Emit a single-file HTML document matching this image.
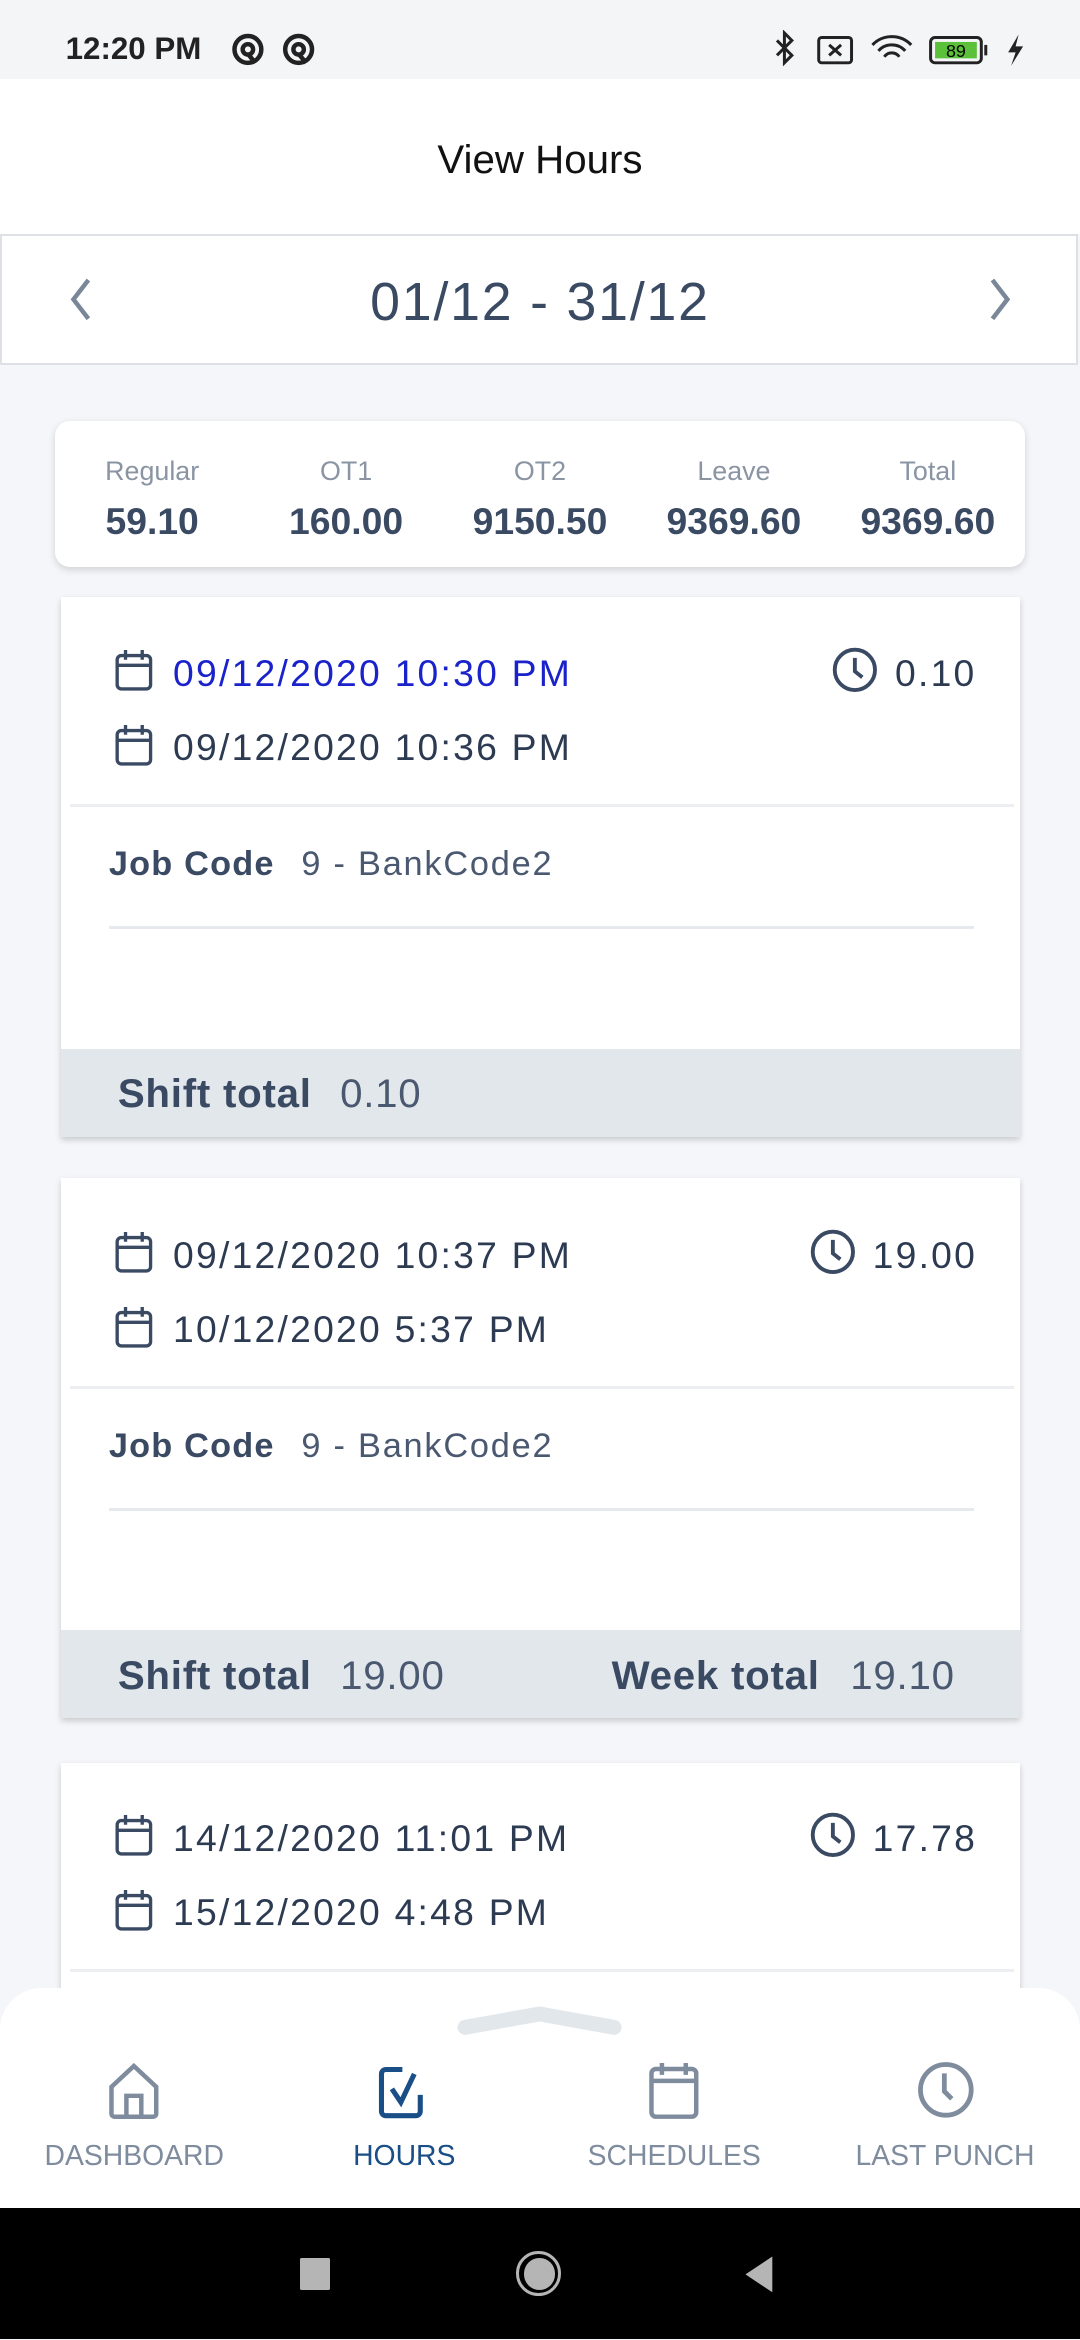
<!DOCTYPE html>
<html><head><meta charset="utf-8"><style>
html,body{margin:0;padding:0;}
html{width:1080px;height:2340px;overflow:hidden;background:#f5f6f9;}
body{zoom:1.49171;width:724px;height:1568px;position:relative;font-family:"Liberation Sans",sans-serif;background:#f5f6f9;overflow:hidden;}
.a{position:absolute;}
.t{position:absolute;white-space:nowrap;line-height:1;}
.card{position:absolute;left:41px;width:643px;background:#fff;box-shadow:0 2px 4px rgba(0,0,0,.18);}
.row{position:absolute;font-size:25px;letter-spacing:1.5px;color:#2c3a52;}
.foot{position:absolute;left:0;right:0;bottom:0;height:59px;background:#e2e7ec;}
.lbl{font-weight:bold;font-size:27px;color:#3b4a63;letter-spacing:0.5px;}
.val{font-size:27px;color:#4a5870;letter-spacing:0.5px;}
.jc{font-size:23px;font-weight:bold;color:#3b4a63;letter-spacing:0.8px;}
.jv{font-size:23px;color:#4a5870;letter-spacing:1.2px;}
.sum div{position:absolute;width:130px;text-align:center;}
</style></head><body>
<!-- status bar -->
<div class="a" style="left:0;top:0;width:724px;height:53px;background:#f4f5f7"></div>
<div class="t" style="left:44px;top:22px;font-size:21px;font-weight:bold;color:#222">12:20 PM</div>
<svg class="a" style="left:154px;top:22px" width="58" height="24" viewBox="0 0 58 24"><g fill="none" stroke="#222" stroke-width="3"><circle cx="12" cy="11" r="9"/><circle cx="12" cy="11" r="3.5"/><path d="M12 14l5 6"/><circle cx="46" cy="11" r="9"/><circle cx="46" cy="11" r="3.5"/><path d="M46 14l5 6"/></g></svg>
<svg class="a" style="left:515px;top:20px" width="180" height="26" viewBox="0 0 180 26"><g fill="none" stroke="#222" stroke-width="2"><path d="M6 7l10 10-5 5V2l5 5-10 10"/><rect x="34" y="5" width="22" height="17" rx="2"/><path d="M41 10l8 7M49 10l-8 7"/><path d="M70 10a18 18 0 0 1 26 0M74 14a12 12 0 0 1 18 0M78 18a6 6 0 0 1 10 0"/></g><rect x="109" y="5" width="34" height="17" rx="3" fill="none" stroke="#222" stroke-width="2"/><rect x="112" y="8" width="28" height="11" fill="#5bc03a"/><text x="126" y="18" font-size="12" text-anchor="middle" font-family="Liberation Sans">89</text><rect x="145" y="10" width="2" height="7" fill="#222"/><path d="M168 3l-7 12h5l-3 9 8-13h-5z" fill="#222"/></svg>
<!-- header -->
<div class="a" style="left:0;top:53px;width:724px;height:104px;background:#fff"></div>
<div class="t" style="left:0;width:724px;text-align:center;top:94px;font-size:27px;color:#111">View Hours</div>
<!-- date nav -->
<div class="a" style="left:0;top:157px;width:720px;height:85px;background:#fff;border:2px solid #dde1e6"></div>
<div class="t" style="left:0;width:724px;text-align:center;top:185px;font-size:36px;letter-spacing:1.2px;color:#3a4a63">01/12 - 31/12</div>
<svg class="a" style="left:44px;top:186px" width="20" height="30"><path d="M15 2L5 15l10 13" fill="none" stroke="#7a8799" stroke-width="3"/></svg>
<svg class="a" style="left:660px;top:186px" width="20" height="30"><path d="M5 2l10 13L5 28" fill="none" stroke="#7a8799" stroke-width="3"/></svg>
<!-- summary -->
<div class="a sum" style="left:37px;top:282px;width:650px;height:98px;background:#fff;border-radius:10px;box-shadow:0 2px 5px rgba(0,0,0,.15)">
<div style="left:0;top:24px;font-size:18px;color:#8a94a3">Regular</div><div style="left:0;top:53px;font-size:25px;font-weight:bold;color:#3b4a63">59.10</div>
<div style="left:130px;top:24px;font-size:18px;color:#8a94a3">OT1</div><div style="left:130px;top:53px;font-size:25px;font-weight:bold;color:#3b4a63">160.00</div>
<div style="left:260px;top:24px;font-size:18px;color:#8a94a3">OT2</div><div style="left:260px;top:53px;font-size:25px;font-weight:bold;color:#3b4a63">9150.50</div>
<div style="left:390px;top:24px;font-size:18px;color:#8a94a3">Leave</div><div style="left:390px;top:53px;font-size:25px;font-weight:bold;color:#3b4a63">9369.60</div>
<div style="left:520px;top:24px;font-size:18px;color:#8a94a3">Total</div><div style="left:520px;top:53px;font-size:25px;font-weight:bold;color:#3b4a63">9369.60</div>
</div>

<svg width="0" height="0" style="position:absolute"><defs>
<symbol id="cal" viewBox="0 0 30 32"><g fill="none" stroke="#3b4a63" stroke-width="2.4"><rect x="3" y="5" width="24" height="24" rx="3"/><path d="M3 12h24M9 1v7M21 1v7"/></g></symbol>
<symbol id="clk" viewBox="0 0 32 32"><g fill="none" stroke="#3b4a63" stroke-width="2.6"><circle cx="16" cy="16" r="13.5"/><path d="M16 8v9l5 4"/></g></symbol>
</defs></svg>

<!-- card 1 -->
<div class="card" style="top:400px;height:362px">
<svg class="a" style="left:35px;top:34px" width="28" height="32"><use href="#cal"/></svg>
<div class="row t" style="left:75px;top:39px;color:#1a22cc">09/12/2020 10:30 PM</div>
<svg class="a" style="left:516px;top:33px" width="32" height="32"><use href="#clk"/></svg>
<div class="row t" style="left:559px;top:39px">0.10</div>
<svg class="a" style="left:35px;top:84px" width="28" height="32"><use href="#cal"/></svg>
<div class="row t" style="left:75px;top:89px">09/12/2020 10:36 PM</div>
<div class="a" style="left:6px;right:4px;top:139px;height:2px;background:#eceef1"></div>
<div class="t jc" style="left:32px;top:168px">Job Code</div>
<div class="t jv" style="left:161px;top:168px">9 - BankCode2</div>
<div class="a" style="left:32px;width:580px;top:221px;height:2px;background:#e6e9ed"></div>
<div class="foot"><div class="t lbl" style="left:38px;top:17px">Shift total</div><div class="t val" style="left:187px;top:17px">0.10</div></div>
</div>
<!-- card 2 -->
<div class="card" style="top:790px;height:362px">
<svg class="a" style="left:35px;top:34px" width="28" height="32"><use href="#cal"/></svg>
<div class="row t" style="left:75px;top:39px">09/12/2020 10:37 PM</div>
<svg class="a" style="left:501px;top:33px" width="32" height="32"><use href="#clk"/></svg>
<div class="row t" style="left:544px;top:39px">19.00</div>
<svg class="a" style="left:35px;top:84px" width="28" height="32"><use href="#cal"/></svg>
<div class="row t" style="left:75px;top:89px">10/12/2020 5:37 PM</div>
<div class="a" style="left:6px;right:4px;top:139px;height:2px;background:#eceef1"></div>
<div class="t jc" style="left:32px;top:168px">Job Code</div>
<div class="t jv" style="left:161px;top:168px">9 - BankCode2</div>
<div class="a" style="left:32px;width:580px;top:221px;height:2px;background:#e6e9ed"></div>
<div class="foot"><div class="t lbl" style="left:38px;top:17px">Shift total</div><div class="t val" style="left:187px;top:17px">19.00</div>
<div class="t lbl" style="left:369px;top:17px">Week total</div><div class="t val" style="left:529px;top:17px">19.10</div></div>
</div>
<!-- card 3 -->
<div class="card" style="top:1182px;height:300px">
<svg class="a" style="left:35px;top:33px" width="28" height="32"><use href="#cal"/></svg>
<div class="row t" style="left:75px;top:38px">14/12/2020 11:01 PM</div>
<svg class="a" style="left:501px;top:32px" width="32" height="32"><use href="#clk"/></svg>
<div class="row t" style="left:544px;top:38px">17.78</div>
<svg class="a" style="left:35px;top:83px" width="28" height="32"><use href="#cal"/></svg>
<div class="row t" style="left:75px;top:88px">15/12/2020 4:48 PM</div>
<div class="a" style="left:6px;right:4px;top:138px;height:2px;background:#eceef1"></div>
</div>
<!-- bottom nav -->
<div class="a" style="left:0;top:1333px;width:724px;height:160px;background:#fff;border-radius:28px 28px 0 0"></div>
<svg class="a" style="left:306px;top:1344px" width="112" height="22"><path d="M6 15L56 6l50 9" fill="none" stroke="#e2e7ec" stroke-width="10" stroke-linecap="round" stroke-linejoin="round"/></svg>
<svg class="a" style="left:72px;top:1383px" width="36" height="38"><g fill="none" stroke="#7f8c9e" stroke-width="3"><path d="M3 16L18 2l15 14v18a2 2 0 0 1-2 2H5a2 2 0 0 1-2-2z"/><path d="M13 36V22h10v14"/></g></svg>
<svg class="a" style="left:253px;top:1384px" width="36" height="38"><g fill="none" stroke="#1a4e86" stroke-width="3.4"><path d="M17 3H6a3 3 0 0 0-3 3v25a3 3 0 0 0 3 3h20a3 3 0 0 0 3-3V20"/><path d="M10 16l6 9 9-19"/></g></svg>
<svg class="a" style="left:434px;top:1381px" width="36" height="40"><g fill="none" stroke="#7f8c9e" stroke-width="3"><rect x="3" y="6" width="30" height="32" rx="3"/><path d="M3 14h30M10 2v8M26 2v8"/></g></svg>
<svg class="a" style="left:614px;top:1381px" width="40" height="40"><g fill="none" stroke="#7f8c9e" stroke-width="3.2"><circle cx="20" cy="20" r="17"/><path d="M19 9v12l5 5"/></g></svg>
<div class="t" style="left:0;width:180px;text-align:center;top:1436px;font-size:19px;color:#7f8c9e">DASHBOARD</div>
<div class="t" style="left:181px;width:180px;text-align:center;top:1436px;font-size:19px;color:#1a4e86">HOURS</div>
<div class="t" style="left:362px;width:180px;text-align:center;top:1436px;font-size:19px;color:#7f8c9e">SCHEDULES</div>
<div class="t" style="left:543px;width:181px;text-align:center;top:1436px;font-size:19px;color:#7f8c9e">LAST PUNCH</div>
<!-- android nav -->
<div class="a" style="left:0;top:1480px;width:724px;height:88px;background:#000"></div>
<div class="a" style="left:201px;top:1514px;width:20px;height:21px;background:#b5b5b5;border-radius:1px"></div>
<div class="a" style="left:346px;top:1509px;width:26px;height:26px;border-radius:50%;border:2.5px solid #b5b5b5"></div>
<div class="a" style="left:351px;top:1514px;width:21px;height:21px;border-radius:50%;background:#b5b5b5"></div>
<svg class="a" style="left:497px;top:1512px" width="24" height="26"><path d="M21 1v24L3 13z" fill="#b5b5b5"/></svg>
</body></html>
